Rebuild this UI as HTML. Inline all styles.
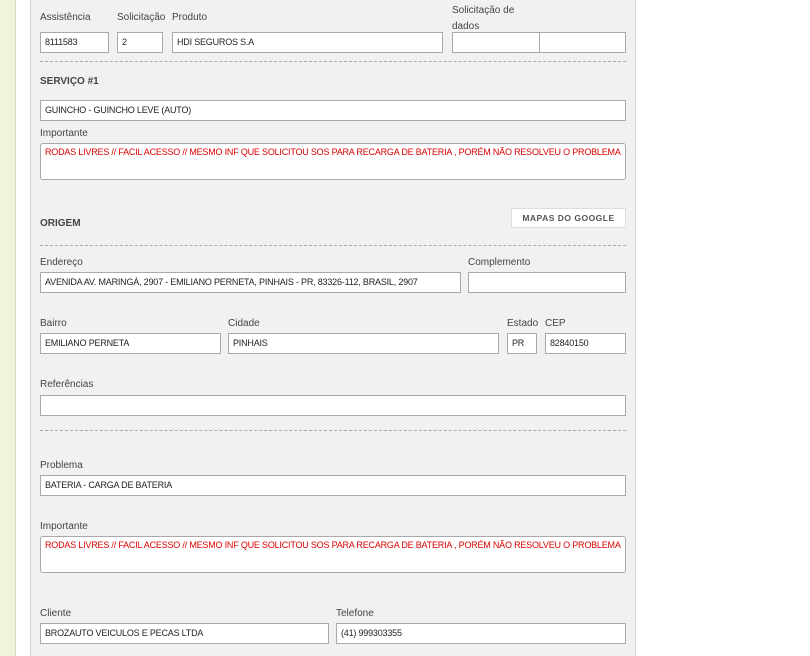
<!DOCTYPE html>
<html><head><meta charset="utf-8"><style>
*{margin:0;padding:0;box-sizing:border-box}
body{width:810px;height:656px;background:#fff;position:relative;overflow:hidden;font-family:"Liberation Sans",sans-serif;color:#444}
.g{position:absolute;left:0;top:0;width:16px;height:656px;background:#eff5d8;border-right:1px solid #d6dcc0}
.p{position:absolute;left:30px;top:0;width:606px;height:656px;background:#f1f1f1;border-left:1px solid #d4d4d4;border-right:1px solid #d4d4d4}
.l{position:absolute;font-size:10px;color:#444;white-space:nowrap}
.i{position:absolute;height:21px;background:#fff;border:1px solid #a9a9a9;font-size:9px;color:#222;padding:4px 0 0 4px;white-space:nowrap;overflow:hidden;letter-spacing:-0.2px}
.t{position:absolute;height:37px;background:#fff;border:1px solid #a9a9a9;border-radius:3px;font-size:9px;color:#d00;padding:3px 0 0 4px;white-space:nowrap;overflow:hidden;letter-spacing:-0.2px}
.d{position:absolute;left:40px;width:586px;border-top:1px dashed #aaa}
.b{position:absolute;font-size:10px;font-weight:bold;color:#444}
.btn{position:absolute;left:511px;top:208px;width:115px;height:20px;background:#fff;border:1px solid #ddd;font-size:8.5px;font-weight:bold;color:#555;text-align:center;line-height:18px;letter-spacing:.5px}
</style></head><body>
<div class="g"></div><div class="p"></div>
<div class="l" style="left:40px;top:12px">Assistência</div>
<div class="l" style="left:117px;top:12px">Solicitação</div>
<div class="l" style="left:172px;top:12px">Produto</div>
<div class="l" style="left:452px;top:3px;line-height:16px">Solicitação de<br>dados</div>
<div class="i" style="left:40px;top:32px;width:69px">8111583</div>
<div class="i" style="left:117px;top:32px;width:46px">2</div>
<div class="i" style="left:172px;top:32px;width:271px">HDI SEGUROS S.A</div>
<div class="i" style="left:452px;top:32px;width:88px"></div>
<div class="i" style="left:539px;top:32px;width:87px"></div>
<div class="d" style="top:61px"></div>
<div class="b" style="left:40px;top:76px">SERVIÇO #1</div>
<div class="i" style="left:40px;top:100px;width:586px">GUINCHO - GUINCHO LEVE (AUTO)</div>
<div class="l" style="left:40px;top:128px">Importante</div>
<div class="t" style="left:40px;top:143px;width:586px">RODAS LIVRES // FACIL ACESSO // MESMO INF QUE SOLICITOU SOS PARA RECARGA DE BATERIA , PORÉM NÃO RESOLVEU O PROBLEMA</div>
<div class="btn">MAPAS DO GOOGLE</div>
<div class="b" style="left:40px;top:218px">ORIGEM</div>
<div class="d" style="top:245px"></div>
<div class="l" style="left:40px;top:257px">Endereço</div>
<div class="l" style="left:468px;top:257px">Complemento</div>
<div class="i" style="left:40px;top:272px;width:421px">AVENIDA AV. MARINGÁ, 2907 - EMILIANO PERNETA, PINHAIS - PR, 83326-112, BRASIL, 2907</div>
<div class="i" style="left:468px;top:272px;width:158px"></div>
<div class="l" style="left:40px;top:318px">Bairro</div>
<div class="l" style="left:228px;top:318px">Cidade</div>
<div class="l" style="left:507px;top:318px">Estado</div>
<div class="l" style="left:545px;top:318px">CEP</div>
<div class="i" style="left:40px;top:333px;width:181px">EMILIANO PERNETA</div>
<div class="i" style="left:228px;top:333px;width:271px">PINHAIS</div>
<div class="i" style="left:507px;top:333px;width:30px">PR</div>
<div class="i" style="left:545px;top:333px;width:81px">82840150</div>
<div class="l" style="left:40px;top:379px">Referências</div>
<div class="i" style="left:40px;top:395px;width:586px"></div>
<div class="d" style="top:430px"></div>
<div class="l" style="left:40px;top:460px">Problema</div>
<div class="i" style="left:40px;top:475px;width:586px">BATERIA - CARGA DE BATERIA</div>
<div class="l" style="left:40px;top:521px">Importante</div>
<div class="t" style="left:40px;top:536px;width:586px">RODAS LIVRES // FACIL ACESSO // MESMO INF QUE SOLICITOU SOS PARA RECARGA DE BATERIA , PORÉM NÃO RESOLVEU O PROBLEMA</div>
<div class="l" style="left:40px;top:608px">Cliente</div>
<div class="l" style="left:336px;top:608px">Telefone</div>
<div class="i" style="left:40px;top:623px;width:289px">BROZAUTO VEICULOS E PECAS LTDA</div>
<div class="i" style="left:336px;top:623px;width:290px">(41) 999303355</div>
</body></html>
